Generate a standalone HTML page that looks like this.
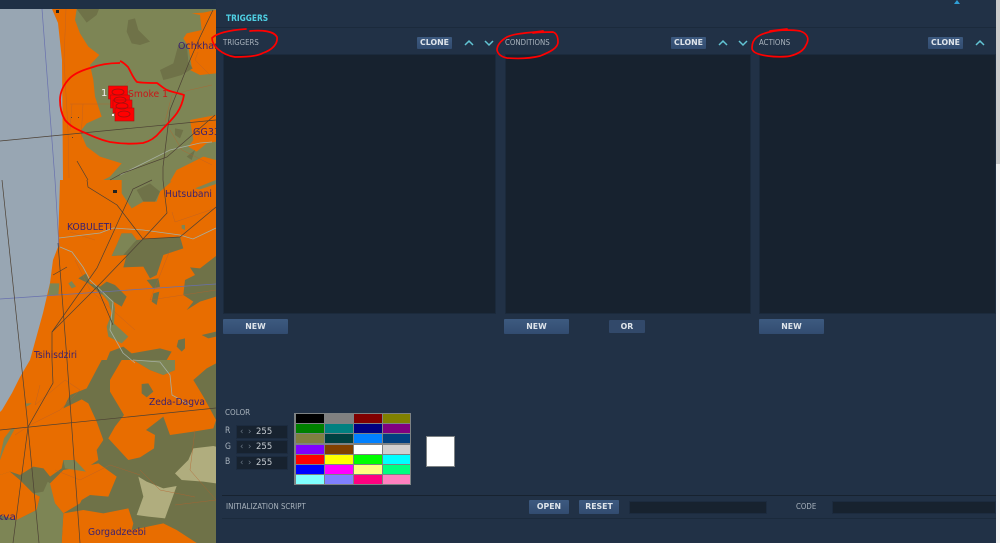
<!DOCTYPE html>
<html><head><meta charset="utf-8">
<style>
html,body{margin:0;padding:0;background:#213146}
body{width:1000px;height:543px;overflow:hidden;position:relative;font-family:"DejaVu Sans","Liberation Sans",sans-serif}
.a{position:absolute}
.t{position:absolute;color:#a9b3bd;font-size:7.800px;line-height:10px;white-space:nowrap;transform:scaleX(.9);transform-origin:0 50%}
.list{position:absolute;background:#17222f;border:1px solid #1b2a3c;box-sizing:border-box;top:54px;height:260px}
.btn{position:absolute;background:linear-gradient(#3d5a80,#324c70);color:#dfe5eb;font-size:7.800px;font-weight:bold;text-align:center;box-sizing:border-box;border-radius:1px}
.inp{position:absolute;background:#17222f;border:1px solid #1c2b3f;box-sizing:border-box}
.inp span{position:absolute;top:0;line-height:13px;font-size:8.500px;color:#c6ccd2}
.inp span.c{color:#6d7a88}
.sw{position:absolute;box-sizing:border-box;border:1px solid #7d8284}
</style></head><body>
<svg class="a" style="left:0;top:0;filter:blur(.35px)" width="216" height="543" viewBox="0 0 216 543">
<rect width="216" height="543" fill="#7d8555"/>
<!-- zoom1 area -->
<g transform="scale(.33333)">
<path d="M150 27H230L225 60 240 100 265 140 298 165 270 195 280 240 285 290 305 350 260 370 240 395 260 440 300 470 365 490 330 530 300 545H150Z" fill="#e86d00"/>
<path d="M648 30 610 38 575 40 600 45 605 90 560 100 550 115 565 140 575 200 560 205 600 225 648 220Z" fill="#e86d00"/>
<path d="M570 360 648 345V425L620 430 590 455 565 440 580 420Z" fill="#e86d00"/>
<path d="M510 545 530 510 570 490 610 470 648 480V545Z" fill="#e86d00"/>
<path d="M230 27 260 68 290 45 297 27Z" fill="#6f7248"/>
<path d="M385 60 405 55 415 90 450 125 420 135 395 130 380 95Z" fill="#6f7248"/>
<path d="M480 210 520 190 535 135 560 130 565 185 578 205 545 225 510 235 490 240Z" fill="#6f7248"/>
<path d="M525 385 550 390 540 415 525 405ZM560 470 585 450 575 480Z" fill="#6f7248"/>
</g>
<!-- zoom2 area -->
<g transform="translate(0,180) scale(.33333)">
<path d="M0 0H365V40L395 85 430 65 470 65 480 35 520 0H648V540H0Z" fill="#e86d00"/>
<path d="M585 25 640 3 648 0V12L600 28Z" fill="#7d8555"/>
<path d="M410 30 450 10 480 35 465 65 430 65Z" fill="#6f7248"/>
<path d="M365 160 395 160 410 180 430 178 540 170 550 205 490 225 470 285 450 295 430 260 370 262 380 225 335 228 350 195Z" fill="#6f7248"/>
<path d="M365 160 395 160 410 180 400 190 370 225 335 228 350 195Z" fill="#7d8555"/>
<path d="M648 228 600 265 570 262 585 285 555 300 550 345 580 365 560 390 600 365 648 350Z" fill="#6f7248"/>
<path d="M440 300 475 295 480 320 460 325ZM460 340 478 335 470 375 455 365Z" fill="#6f7248"/>
<path d="M205 310 215 303 228 320 215 325ZM150 310 178 310 175 345 145 345Z" fill="#7d8555"/>
<path d="M235 295 258 280 270 310 300 320 320 305 345 315 380 350 365 380 340 365 300 340 265 310Z" fill="#6f7248"/>
<path d="M300 335 340 362 345 385 342 430 385 470 365 490 325 470 320 440 335 400 325 365Z" fill="#7d8555"/>
<path d="M320 540 330 515 370 500 395 520 480 505 515 515 500 540Z" fill="#6f7248"/>
<path d="M535 480 555 475 555 505 545 515 530 500ZM605 465 648 455V470L625 475Z" fill="#6f7248"/>
<path d="M545 135 555 135 555 150 545 145Z" fill="#7d8555"/>
</g>
<!-- zoom3 area -->
<g transform="translate(0,360) scale(.33333)">
<rect y="0" width="648" height="549" fill="#6f7248"/>
<path d="M0 0H305L260 85 210 105 190 145 245 118 265 130 290 185 310 240 290 270 295 300 250 330 190 300 185 325 150 350 130 325 100 320 60 345 30 335 0 345Z" fill="#e86d00"/>
<path d="M0 345 30 335 60 360 100 400 120 410 110 450 50 480 0 465Z" fill="#e86d00"/>
<path d="M150 370 190 330 250 320 295 310 350 350 325 410 270 405 245 420 240 430 190 460 165 430 150 390Z" fill="#e86d00"/>
<path d="M185 549 190 460 250 450 310 460 385 445 400 490 395 510 490 490 530 510 590 549Z" fill="#e86d00"/>
<path d="M365 0 330 60 330 95 372 165 345 200 325 235 385 300 420 292 462 265 465 225 438 210 490 170 510 225 580 215 640 205 648 180 610 110 580 60 620 25 648 10V0H525V30L490 45 450 30 400 0Z" fill="#e86d00"/>
<path d="M400 0 450 30 490 45 525 30V0Z" fill="#7d8555"/>
<path d="M0 480 50 480 110 450 120 410 100 400 130 355 150 370 165 430 190 460 185 549H0Z" fill="#7d8555"/>
<path d="M30 335 60 345 100 345 130 325 150 350 130 395 100 400 60 360Z" fill="#6f7248"/>
<path d="M190 300 225 300 258 335 195 325Z" fill="#7d8555"/>
<path d="M425 72 445 70 460 95 440 112 425 100Z" fill="#6f7248"/>
<path d="M525 340 565 300 580 265 640 258 648 260V370L610 365 545 360ZM415 350 440 365 490 385 530 378 495 475 445 470 410 465 430 410Z" fill="#b0ad7e"/>
<path d="M0 290 12 235 35 205 45 205 15 260 0 300ZM75 130 95 130 80 140Z" fill="#7d8555"/>
</g>
<!-- sea -->
<path d="M0 9H52L58 23 62 60 63 180 60 180 58 247 53 260 50 283 43 313 30 360 20 377 12 393 2 410 0 412Z" fill="#98a6b3"/>
<!-- contours -->
<g fill="none" stroke="#b6602c" stroke-width=".5" opacity=".75">
<path d="M66 9 64 60 68 130 69 178M70 104H110L122 115M70 130 72 104M83 104 81 140"/>
<path d="M110 104 125 85 130 80M165 122 172 95 190 90 212 85M170 130 182 150 212 165M210 75 195 60 198 52"/>
<path d="M95 240 70 232M170 250 150 300 216 290M75 260 90 290 135 330M172 212 175 222 216 208"/>
<path d="M40 385 35 405 65 380 80 390 60 410 30 425 15 435M55 470 80 480 110 465 140 475M195 430 190 470 216 500 175 505M140 470 160 490 195 497"/>
</g>
<!-- river -->
<g fill="none" stroke="#a6afa2" stroke-width=".8">
<path d="M59 238 100 233 113 228 143 230 180 235 193 239 216 228"/>
<path d="M60 247 72 252 83 267 90 280 113 302 110 330 123 353 135 363"/>
<path d="M120 175 140 165 170 150 200 143 212 142M133 360 160 362 170 375 172 395 190 405"/>
</g>
<!-- grid lines -->
<g fill="none" stroke="#6870ae" stroke-width=".7">
<path d="M42 9 55 180 59 247"/>
<path d="M0 299 216 284"/>
</g>
<g fill="none" stroke="#4c4034" stroke-width=".7">
<path d="M0 141 216 120"/>
<path d="M0 430 216 408"/>
<path d="M2 180 21 360 28 427 39 543"/>
<path d="M213 10 200 37 190 60 170 110 163 167 163 180 167 213 143 239 97 287 52 332 52 360 53 383 28 427 13 543"/>
<path d="M77 161 88 180M215 115 167 157 123 173 110 180M87 180 88 187 117 205 143 239 180 237 216 207"/>
<path d="M152 180 133 189 113 233 97 268 52 332"/>
<path d="M97 287 113 325"/>
<path d="M58 243 67 360 80 543M53 275 67 267"/>
</g>
<!-- town dots -->
<rect x="56" y="10" width="3" height="3" fill="#222"/>
<rect x="113" y="190" width="4" height="3" fill="#222"/>
<g fill="#543"><rect x="71" y="117" width="1" height="1"/><rect x="78" y="117" width="1" height="1"/><rect x="72" y="137" width="1" height="1"/></g>
<!-- labels -->
<g font-family="DejaVu Sans,sans-serif" font-size="10" fill="#3a2070">
<text x="178" y="49" textLength="58" lengthAdjust="spacingAndGlyphs">Ochkhamuri</text>
<text x="193" y="135" textLength="27" lengthAdjust="spacingAndGlyphs">GG33</text>
<text x="165" y="197" textLength="47" lengthAdjust="spacingAndGlyphs">Hutsubani</text>
<text x="67" y="230" textLength="45" lengthAdjust="spacingAndGlyphs">KOBULETI</text>
<text x="34" y="358" textLength="43" lengthAdjust="spacingAndGlyphs">Tsihisdziri</text>
<text x="149" y="405" textLength="56" lengthAdjust="spacingAndGlyphs">Zeda-Dagva</text>
<text x="88" y="535" textLength="58" lengthAdjust="spacingAndGlyphs">Gorgadzeebi</text>
<text x="-3" y="520" textLength="19" lengthAdjust="spacingAndGlyphs">kva</text>
</g>
<!-- units -->
<g>
<rect x="108.500" y="86" width="19" height="13" fill="#f00" stroke="#a11" stroke-width=".6"/>
<rect x="110.500" y="95" width="19" height="13" fill="#f00" stroke="#a11" stroke-width=".6"/>
<rect x="113" y="100" width="19" height="13" fill="#f00" stroke="#a11" stroke-width=".6"/>
<rect x="115" y="108" width="19" height="13" fill="#f00" stroke="#a11" stroke-width=".6"/>
<g fill="none" stroke="#a01010" stroke-width=".8">
<ellipse cx="118" cy="92" rx="6" ry="3"/>
<ellipse cx="120" cy="100" rx="6" ry="3"/>
<ellipse cx="122" cy="106" rx="6" ry="3"/>
<ellipse cx="124" cy="114" rx="6" ry="3"/>
</g>
<rect x="112" y="114" width="2" height="2" fill="#f4eeee"/>
<text x="101" y="96" font-family="DejaVu Sans,sans-serif" font-size="10" fill="#eee">1</text>
<text x="128" y="97" font-family="DejaVu Sans,sans-serif" font-size="10" fill="#c81818" textLength="40" lengthAdjust="spacingAndGlyphs">Smoke 1</text>
</g>
<!-- red annotation on map -->
<path d="M120 63C108 63 98 65 90 68 80 71 74 74 70 78 64 84 60 92 60 100 60 108 62 115 65 120 70 126 76 129 83 132 92 136 100 140 110 142 122 144 134 144 143 143 151 141 156 137 160 132 166 125 172 120 177 113 181 107 183 101 184 95 178 93 172 92 167 90 163 88 160 85 157 83 150 83 143 83 137 82 133 78 131 72 128 67 125 64 123 62 120 61" fill="none" stroke="#f00" stroke-width="1.800" stroke-linejoin="round"/>
</svg>

<!-- top bar over map -->
<div class="a" style="left:0;top:0;width:216px;height:9px;background:#1f3045"></div>

<!-- panel header -->
<div class="a" style="left:216px;top:27px;width:780px;height:1px;background:#1b2a3c"></div>
<div class="t" style="left:226px;top:14px;color:#4fd0e4;font-weight:bold;font-size:8.500px;transform:scaleX(.88)">TRIGGERS</div>
<div class="a" style="left:954px;top:0;width:0;height:0;border-left:3px solid transparent;border-right:3px solid transparent;border-bottom:4px solid #2f9fd6"></div>

<div class="t" style="left:223px;top:38px">TRIGGERS</div>
<div class="btn" style="left:417px;top:37px;width:35px;height:12px;line-height:12px">CLONE</div>
<div class="t" style="left:505px;top:38px">CONDITIONS</div>
<div class="btn" style="left:671px;top:37px;width:35px;height:12px;line-height:12px">CLONE</div>
<div class="t" style="left:759px;top:38px">ACTIONS</div>
<div class="btn" style="left:928px;top:37px;width:35px;height:12px;line-height:12px">CLONE</div>

<svg class="a" style="left:0;top:0" width="1000" height="60" fill="none" stroke="#62c4d4" stroke-width="1.500">
<path d="M465 45 469 41 473 45M485 41 489 45 493 41M719 45 723 41 727 45M739 41 743 45 747 41M976 45 980 41 984 45"/>
</svg>

<div class="list" style="left:223px;width:273px"></div>
<div class="list" style="left:505px;width:246px"></div>
<div class="list" style="left:759px;width:237px"></div>

<div class="btn" style="left:223px;top:319px;width:65px;height:15px;line-height:15px">NEW</div>
<div class="btn" style="left:504px;top:319px;width:65px;height:15px;line-height:15px">NEW</div>
<div class="btn" style="left:609px;top:320px;width:36px;height:13px;line-height:13px;background:#32496a">OR</div>
<div class="btn" style="left:759px;top:319px;width:65px;height:15px;line-height:15px">NEW</div>

<!-- color -->
<div class="t" style="left:225px;top:408px;font-size:8px">COLOR</div>
<div class="t" style="left:225px;top:426px;font-size:8.500px">R</div>
<div class="t" style="left:225px;top:442px;font-size:8.500px">G</div>
<div class="t" style="left:225px;top:457px;font-size:8.500px">B</div>
<div class="inp" style="left:236px;top:425px;width:52px;height:14px"><span class="c" style="left:3px">‹</span><span class="c" style="left:11px">›</span><span style="left:19px">255</span></div>
<div class="inp" style="left:236px;top:440px;width:52px;height:14px"><span class="c" style="left:3px">‹</span><span class="c" style="left:11px">›</span><span style="left:19px">255</span></div>
<div class="inp" style="left:236px;top:456px;width:52px;height:14px"><span class="c" style="left:3px">‹</span><span class="c" style="left:11px">›</span><span style="left:19px">255</span></div>

<div class="a" style="left:294px;top:413px;width:117px;height:72px;background:#7d8284"></div>
<div class="sw" style="left:295px;top:413px;width:30px;height:11px;background:#000"></div>
<div class="sw" style="left:324px;top:413px;width:30px;height:11px;background:#808080"></div>
<div class="sw" style="left:353px;top:413px;width:30px;height:11px;background:#800000"></div>
<div class="sw" style="left:382px;top:413px;width:29px;height:11px;background:#808000"></div>
<div class="sw" style="left:295px;top:423px;width:30px;height:11px;background:#008000"></div>
<div class="sw" style="left:324px;top:423px;width:30px;height:11px;background:#008080"></div>
<div class="sw" style="left:353px;top:423px;width:30px;height:11px;background:#000080"></div>
<div class="sw" style="left:382px;top:423px;width:29px;height:11px;background:#800080"></div>
<div class="sw" style="left:295px;top:433px;width:30px;height:11px;background:#808040"></div>
<div class="sw" style="left:324px;top:433px;width:30px;height:11px;background:#004040"></div>
<div class="sw" style="left:353px;top:433px;width:30px;height:11px;background:#0080ff"></div>
<div class="sw" style="left:382px;top:433px;width:29px;height:11px;background:#004080"></div>
<div class="sw" style="left:295px;top:444px;width:30px;height:11px;background:#8000ff"></div>
<div class="sw" style="left:324px;top:444px;width:30px;height:11px;background:#804000"></div>
<div class="sw" style="left:353px;top:444px;width:30px;height:11px;background:#fff"></div>
<div class="sw" style="left:382px;top:444px;width:29px;height:11px;background:#d0d0d0"></div>
<div class="sw" style="left:295px;top:454px;width:30px;height:11px;background:#f00"></div>
<div class="sw" style="left:324px;top:454px;width:30px;height:11px;background:#ff0"></div>
<div class="sw" style="left:353px;top:454px;width:30px;height:11px;background:#0f0"></div>
<div class="sw" style="left:382px;top:454px;width:29px;height:11px;background:#0ff"></div>
<div class="sw" style="left:295px;top:464px;width:30px;height:11px;background:#00f"></div>
<div class="sw" style="left:324px;top:464px;width:30px;height:11px;background:#f0f"></div>
<div class="sw" style="left:353px;top:464px;width:30px;height:11px;background:#ffff80"></div>
<div class="sw" style="left:382px;top:464px;width:29px;height:11px;background:#00ff80"></div>
<div class="sw" style="left:295px;top:474px;width:30px;height:11px;background:#80ffff"></div>
<div class="sw" style="left:324px;top:474px;width:30px;height:11px;background:#8080ff"></div>
<div class="sw" style="left:353px;top:474px;width:30px;height:11px;background:#ff0080"></div>
<div class="sw" style="left:382px;top:474px;width:29px;height:11px;background:#ff80c0"></div>
<div class="a" style="left:426px;top:436px;width:29px;height:31px;box-sizing:border-box;background:#fff;border:1px solid #7d8284"></div>

<!-- init script bar -->
<div class="a" style="left:222px;top:495px;width:774px;height:1px;background:#17222f"></div>
<div class="a" style="left:222px;top:518px;width:774px;height:1px;background:#1b2a3c"></div>
<div class="t" style="left:226px;top:502px">INITIALIZATION SCRIPT</div>
<div class="btn" style="left:529px;top:500px;width:40px;height:14px;line-height:14px">OPEN</div>
<div class="btn" style="left:579px;top:500px;width:40px;height:14px;line-height:14px">RESET</div>
<div class="inp" style="left:629px;top:501px;width:138px;height:13px"></div>
<div class="t" style="left:796px;top:502px">CODE</div>
<div class="inp" style="left:832px;top:501px;width:164px;height:13px"></div>

<!-- scrollbar -->
<div class="a" style="left:996px;top:0;width:4px;height:543px;background:#f1f1f1"></div>
<div class="a" style="left:996px;top:0;width:4px;height:164px;background:#cdcdcd"></div>

<!-- red annotations on panel -->
<svg class="a" style="left:0;top:0" width="1000" height="62" fill="none" stroke="#f00" stroke-width="1.700" stroke-linecap="round">
<path d="M246 29C232 30 218 32 212 38 212 46 222 55 235 57 248 57 258 56 263 53 272 50 278 44 277 37 274 31 262 30 250 31"/>
<path d="M543 31C530 33 515 33 507 37 500 41 497 46 497 50 498 55 502 57 507 58 520 59 532 58 540 56 550 52 558 48 558 42 558 36 556 33 553 32 545 32 540 32 533 33"/>
<path d="M770 31 787 29M787 30C775 30 762 33 757 37 753 40 752 44 752 48 752 53 760 55 768 56 775 57 785 57 790 56 798 54 804 50 806 45 809 40 809 34 800 31 795 30 790 30 785 30"/>
</svg>
</body></html>
